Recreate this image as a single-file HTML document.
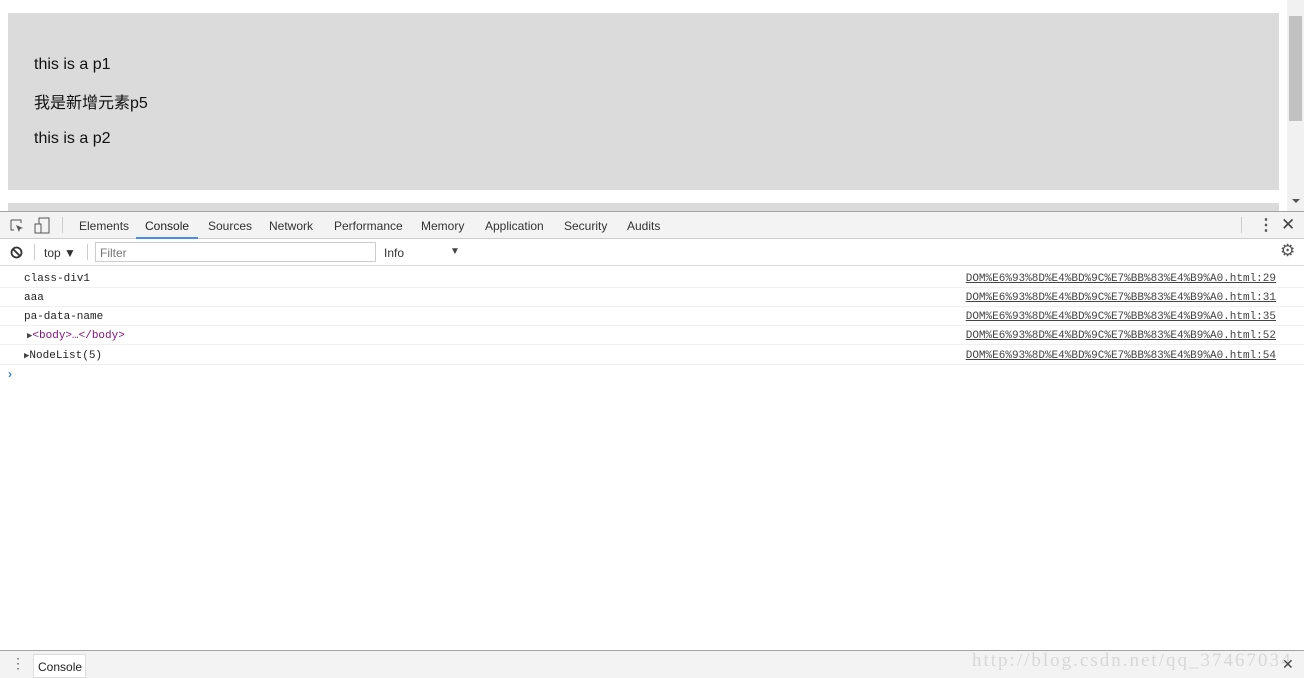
<!DOCTYPE html>
<html><head><meta charset="utf-8"><style>
*{margin:0;padding:0;box-sizing:border-box}
body{width:1304px;height:678px;overflow:hidden;background:#fff;font-family:"Liberation Sans","Noto Sans CJK SC",sans-serif;position:relative}
.abs{position:absolute}
.box{left:8px;top:13px;width:1271px;height:177px;background:#dbdbdb}
.box p{position:absolute;left:26px;font-size:16px;color:#111;line-height:20px;height:20px}
.sb{left:1287px;top:0;width:17px;height:211px;background:#f1f1f1}
.tb{left:0;top:211px;width:1304px;height:28px;background:#f3f3f3;border-top:1px solid #a3a3a3;border-bottom:1px solid #cdcdcd}
.tab{position:absolute;top:7px;font-size:12px;color:#333}
.fb{left:0;top:239px;width:1304px;height:27px;background:#fff;border-bottom:1px solid #ddd}
.row{position:absolute;left:0;width:1304px;height:19.5px;border-bottom:1px solid #f0f0f0;font-family:"Liberation Mono",monospace;font-size:11px;color:#222}
.row .l{position:absolute;left:24px;top:5px}
.row .r{position:absolute;right:28px;top:5px;text-decoration:underline;color:#444}
.bot{left:0;top:650px;width:1304px;height:28px;background:#f3f3f3;border-top:1px solid #a3a3a3}
</style></head><body>
<div class="abs box"><p style="top:42px">this is a p1</p><p style="top:81px">我是新增元素p5</p><p style="top:116px">this is a p2</p></div>
<div class="abs" style="left:8px;top:203px;width:1271px;height:8px;background:#dbdbdb"></div>
<div class="abs sb"><div class="abs" style="left:2px;top:16px;width:13px;height:105px;background:#c1c1c1"></div>
<div class="abs" style="left:5px;top:199px;width:0;height:0;border-left:4px solid transparent;border-right:4px solid transparent;border-top:4px solid #555"></div></div>
<div class="abs tb">
<svg class="abs" style="left:9px;top:6px" width="16" height="16"><path d="M2 2h10v3M2 2v10h3" stroke="#555" fill="none"/><path d="M7 7l7 3-3 1-1 3z" fill="#555"/></svg>
<svg class="abs" style="left:34px;top:5px" width="18" height="17"><rect x="5" y="1" width="10" height="15" stroke="#555" fill="none"/><rect x="1" y="7" width="6" height="9" stroke="#555" fill="#f3f3f3"/></svg>
<div class="abs" style="left:62px;top:5px;width:1px;height:16px;background:#ccc"></div>
<span class="tab" style="left:79px">Elements</span>
<span class="tab" style="left:145px;color:#222">Console</span>
<div class="abs" style="left:136px;top:25px;width:62px;height:2px;background:#4a8ee5"></div>
<span class="tab" style="left:208px">Sources</span>
<span class="tab" style="left:269px">Network</span>
<span class="tab" style="left:334px">Performance</span>
<span class="tab" style="left:421px">Memory</span>
<span class="tab" style="left:485px">Application</span>
<span class="tab" style="left:564px">Security</span>
<span class="tab" style="left:627px">Audits</span>
<div class="abs" style="left:1241px;top:5px;width:1px;height:16px;background:#ccc"></div>
<span class="tab" style="left:1258px;top:3px;font-size:16px;font-weight:bold;color:#555">⋮</span>
<span class="tab" style="left:1281px;top:3px;font-size:17px;color:#444">✕</span>
</div>
<div class="abs fb">
<svg class="abs" style="left:10px;top:7px" width="13" height="13"><circle cx="6.5" cy="6.5" r="5" stroke="#333" stroke-width="1.8" fill="none"/><path d="M3 3l7 7" stroke="#333" stroke-width="1.8"/></svg>
<div class="abs" style="left:34px;top:5px;width:1px;height:16px;background:#ccc"></div>
<span class="abs" style="left:44px;top:7px;font-size:12px;color:#333">top ▼</span>
<div class="abs" style="left:87px;top:5px;width:1px;height:16px;background:#ccc"></div>
<div class="abs" style="left:95px;top:3px;width:281px;height:20px;border:1px solid #ccc;font-size:12px;color:#777;padding:3px 4px">Filter</div>
<span class="abs" style="left:384px;top:7px;font-size:12px;color:#333">Info</span>
<span class="abs" style="left:450px;top:7px;font-size:10px;color:#444">▼</span>
<span class="abs" style="left:1280px;top:2px;font-size:17px;color:#555">⚙</span>
</div>
<div class="row" style="top:268px"><span class="l">class-div1</span><span class="r">DOM%E6%93%8D%E4%BD%9C%E7%BB%83%E4%B9%A0.html:29</span></div>
<div class="row" style="top:287px"><span class="l">aaa</span><span class="r">DOM%E6%93%8D%E4%BD%9C%E7%BB%83%E4%B9%A0.html:31</span></div>
<div class="row" style="top:306px"><span class="l">pa-data-name</span><span class="r">DOM%E6%93%8D%E4%BD%9C%E7%BB%83%E4%B9%A0.html:35</span></div>
<div class="row" style="top:325px"><span class="l" style="left:27px"><span style="font-size:9px;color:#444">▶</span><span style="color:#881280">&lt;body&gt;…&lt;/body&gt;</span></span><span class="r">DOM%E6%93%8D%E4%BD%9C%E7%BB%83%E4%B9%A0.html:52</span></div>
<div class="row" style="top:345px;border-bottom:1px solid #eee"><span class="l"><span style="font-size:9px;color:#444">▶</span>NodeList(5)</span><span class="r">DOM%E6%93%8D%E4%BD%9C%E7%BB%83%E4%B9%A0.html:54</span></div>
<span class="abs" style="left:8px;top:367px;font-size:12px;color:#367cf1;font-weight:bold">›</span>
<div class="abs bot">
<span class="abs" style="left:11px;top:4px;font-size:14px;color:#666">⋮</span>
<div class="abs" style="left:33px;top:3px;width:53px;height:24px;background:#fff;border:1px solid #ddd;font-size:12px;color:#222;padding:5px 0 0 4px">Console</div>
<span class="abs" style="left:972px;top:-1px;font-family:'Liberation Serif',serif;font-size:19px;letter-spacing:2px;color:#d8d8d8">http://blog.csdn.net/qq_37467034</span>
<span class="abs" style="left:1282px;top:5px;font-size:14px;color:#444">✕</span>
</div>
</body></html>
